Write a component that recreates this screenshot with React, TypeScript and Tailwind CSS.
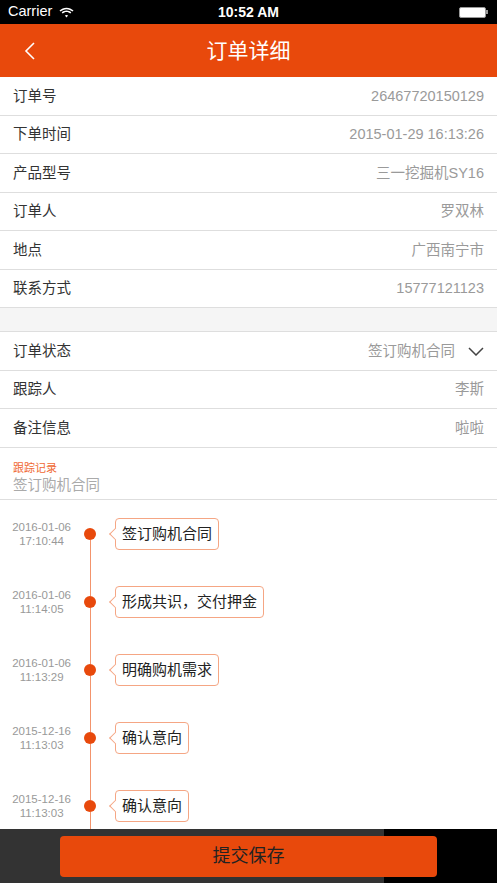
import React from "react";

const FONT = { fontFamily: '"Liberation Sans", "Noto Sans CJK SC", sans-serif' };

const infoRows = [
  { label: "订单号", value: "26467720150129" },
  { label: "下单时间", value: "2015-01-29 16:13:26" },
  { label: "产品型号", value: "三一挖掘机SY16" },
  { label: "订单人", value: "罗双林" },
  { label: "地点", value: "广西南宁市" },
  { label: "联系方式", value: "15777121123" },
];

const timeline = [
  { date: "2016-01-06", time: "17:10:44", text: "签订购机合同" },
  { date: "2016-01-06", time: "11:14:05", text: "形成共识，交付押金" },
  { date: "2016-01-06", time: "11:13:29", text: "明确购机需求" },
  { date: "2015-12-16", time: "11:13:03", text: "确认意向" },
  { date: "2015-12-16", time: "11:13:03", text: "确认意向" },
];

const Row: React.FC<{ label: string; value: string; chevron?: boolean }> = ({ label, value, chevron }) => (
  <div className="h-[38.5px] flex items-center justify-between pl-[13px] pr-[13px] pt-[2px] bg-white border-b border-[#dedede]">
    <span className="text-[14.5px] text-[#333]">{label}</span>
    <div className="flex items-center gap-[13px]">
      <span className="text-[14.5px] text-[#9a9a9a]">{value}</span>
      {chevron && (
        <svg width="16" height="9" viewBox="0 0 16 9" fill="none">
          <polyline points="1,1 8,8 15,1" stroke="#444" strokeWidth="1.5" />
        </svg>
      )}
    </div>
  </div>
);

export default function App() {
  return (
    <div className="w-[497px] h-[883px] flex flex-col bg-white overflow-hidden" style={FONT}>
      {/* status bar */}
      <div className="h-[24px] bg-black text-white flex items-center justify-between px-[8px] shrink-0">
        <div className="flex items-center gap-[7px] w-[150px]">
          <span className="text-[14.5px]">Carrier</span>
          <svg width="15" height="11" viewBox="0 0 15 11" fill="white">
            <path d="M7.5 2.2c2.3 0 4.4.9 6 2.4l1-1.1C12.7 1.8 10.2.7 7.5.7S2.3 1.8.5 3.5l1 1.1c1.6-1.5 3.7-2.4 6-2.4z" />
            <path d="M7.5 5.1c1.5 0 2.8.6 3.8 1.5l1-1.1C11 4.3 9.3 3.6 7.5 3.6S4 4.3 2.7 5.5l1 1.1c1-.9 2.3-1.5 3.8-1.5z" />
            <path d="M7.5 8c.7 0 1.2.2 1.6.6L7.5 10.4 5.9 8.6c.4-.4.9-.6 1.6-.6z" />
          </svg>
        </div>
        <span className="text-[14px] font-bold">10:52 AM</span>
        <div className="w-[150px] flex justify-end items-center pr-[1px]">
          <div className="w-[27px] h-[11px] border border-[#999] rounded-[2px] bg-white" />
          <div className="w-[2px] h-[4px] bg-[#999]" />
        </div>
      </div>

      {/* nav bar */}
      <div className="h-[53px] bg-[#e8490c] flex items-center shrink-0">
        <div className="w-[60px] pl-[24px] flex items-center">
          <svg width="12" height="18" viewBox="0 0 12 18" fill="none">
            <polyline points="10,1 2,9 10,17" stroke="white" strokeWidth="1.6" />
          </svg>
        </div>
        <div className="flex-1 text-center text-white text-[21px] pr-[60px]">订单详细</div>
      </div>

      <div className="flex-1 overflow-hidden">
        {infoRows.map((r) => (
          <Row key={r.label} label={r.label} value={r.value} />
        ))}
        <div className="h-[24px] bg-[#f5f5f5] border-b border-[#dedede]" />
        <Row label="订单状态" value="签订购机合同" chevron />
        <Row label="跟踪人" value="李斯" />
        <Row label="备注信息" value="啦啦" />

        <div className="h-[52px] border-b border-[#dedede] pl-[13px] pt-[13px]">
          <div className="text-[11px] leading-[14px] text-[#f06a35]">跟踪记录</div>
          <div className="text-[14.5px] leading-[20px] text-[#aaa]">签订购机合同</div>
        </div>

        <div className="flex flex-col">
          {timeline.map((t, i) => (
            <div key={i} className="h-[68px] flex items-stretch">
              <div className="w-[76px] pr-[5px] flex justify-end items-center">
                <div className="text-center text-[11.5px] leading-[14px] text-[#999]">
                  <div>{t.date}</div>
                  <div>{t.time}</div>
                </div>
              </div>
              <div className="w-[28px] flex flex-col items-center">
                <div className={`flex-1 w-px ${i === 0 ? "bg-transparent" : "bg-[#f3946c]"}`} />
                <div className="w-[12px] h-[12px] rounded-full bg-[#e8490c] shrink-0" />
                <div className="flex-1 w-px bg-[#f3946c]" />
              </div>
              <div className="flex items-center pl-[11px]">
                <div className="relative bg-white border border-[#f5a684] rounded-[4px] px-[6px] py-[3px]">
                  <div className="absolute left-[-5px] top-1/2 -translate-y-1/2 w-[9px] h-[9px] bg-white border-l border-b border-[#f5a684] rotate-45" />
                  <span className="relative text-[15px] leading-[20px] text-[#222]">{t.text}</span>
                </div>
              </div>
            </div>
          ))}
        </div>
      </div>

      {/* bottom bar */}
      <div className="h-[54px] shrink-0 flex bg-[linear-gradient(to_right,#333_0,#333_384px,#000_384px)] items-center justify-center">
        <button className="w-[377px] h-[41px] mt-[1px] rounded-[4px] bg-[#e8490c] text-[18px] text-[#222]">提交保存</button>
      </div>
    </div>
  );
}
